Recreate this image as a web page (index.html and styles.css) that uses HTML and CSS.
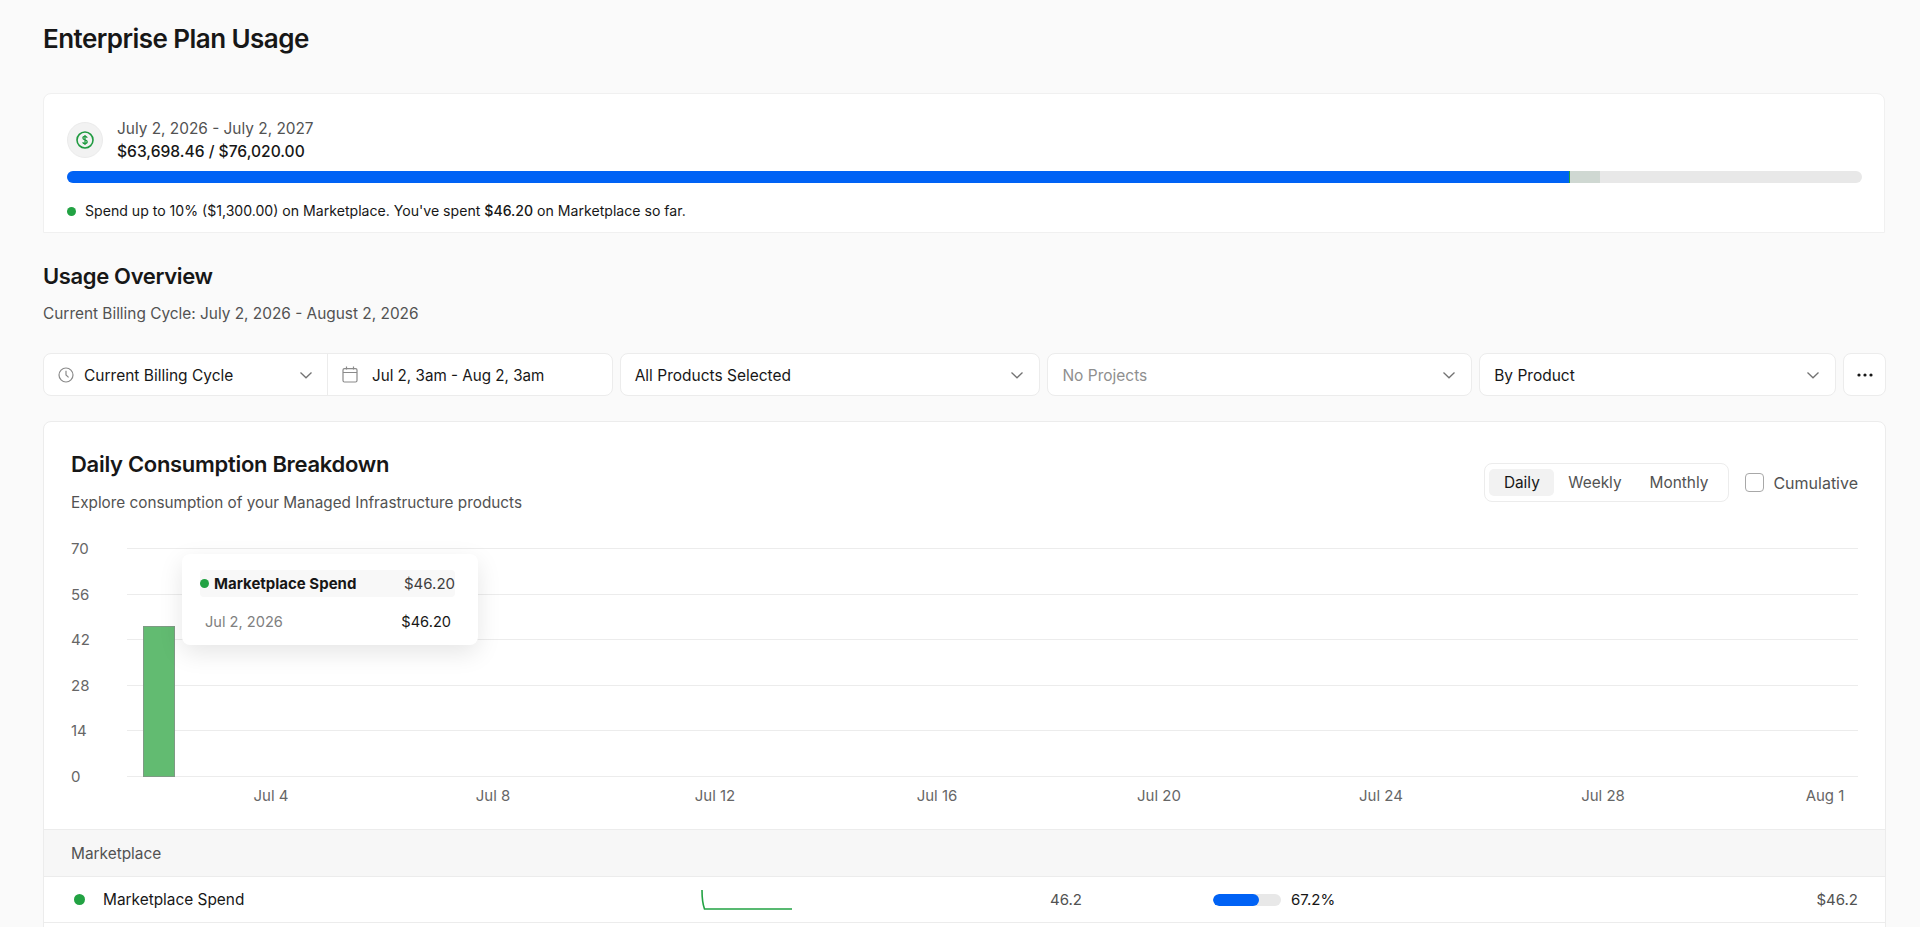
FILE: index.html
```html
<!DOCTYPE html>
<html>

<head>
    <meta charset="utf-8">
    <title>Enterprise Plan Usage</title>
    <link rel="stylesheet" href="styles.css">
</head>

<body>
    <div class="page">
        <h1 class="page-title">Enterprise Plan Usage</h1>

        <section class="plan-card">
            <div class="plan-head">
                <span class="plan-icon">
                    <svg width="18" height="18" viewBox="0 0 18 18" fill="none" stroke="#1f9a40" stroke-width="1.600">
                        <circle cx="9" cy="9" r="8"></circle>
                        <path d="M11.200 6.700c-.3-.8-1.100-1.300-2.200-1.300-1.200 0-2.100.7-2.100 1.700 0 2.400 4.300 1.200 4.300 3.700 0 1.100-1 1.800-2.200 1.800-1.100 0-2-.5-2.300-1.400M9 4v10" stroke-width="1.300"></path>
                    </svg>
                </span>
                <div class="plan-text">
                    <div class="plan-dates">July 2, 2026 - July 2, 2027</div>
                    <div class="plan-amount">$63,698.46 / $76,020.00</div>
                </div>
            </div>
            <div class="plan-bar">
                <div class="plan-bar-used"></div>
                <div class="plan-bar-mark"></div>
                <div class="plan-bar-market"></div>
            </div>
            <div class="plan-note">
                <span class="dot"></span>
                <span>Spend up to 10% ($1,300.00) on Marketplace. You've spent <span class="medium">$46.20</span> on Marketplace so far.</span>
            </div>
        </section>

        <h2 class="section-title">Usage Overview</h2>
        <p class="section-sub">Current Billing Cycle: July 2, 2026 - August 2, 2026</p>

        <div class="toolbar">
            <div class="range-group">
                <div class="range-preset">
                    <svg class="tool-icon" width="16" height="16" viewBox="0 0 16 16" fill="none" stroke="#8a8a8a" stroke-width="1.2">
                        <circle cx="8" cy="8" r="7"></circle>
                        <path d="M8 3.800V8l2.600 2.400"></path>
                    </svg>
                    <span class="select-label">Current Billing Cycle</span>
                    <svg class="chevron" width="14" height="8" viewBox="0 0 14 8" fill="none" stroke="#737373" stroke-width="1.300">
                        <path d="M1.500 1.500L7 6.800l5.500-5.300"></path>
                    </svg>
                </div>
                <div class="range-dates">
                    <svg class="tool-icon" width="16" height="17" viewBox="0 0 16 17" fill="none" stroke="#8a8a8a" stroke-width="1.200">
                        <rect x="1" y="2.600" width="14" height="13.400" rx="1.500"></rect>
                        <path d="M1 6.500h14M4.500 .5v3M11.500 .5v3"></path>
                    </svg>
                    <span class="select-label">Jul 2, 3am - Aug 2, 3am</span>
                </div>
            </div>
            <div class="select select-products">
                <span class="select-label">All Products Selected</span>
                <svg class="chevron" width="14" height="8" viewBox="0 0 14 8" fill="none" stroke="#737373" stroke-width="1.300">
                    <path d="M1.500 1.500L7 6.800l5.500-5.300"></path>
                </svg>
            </div>
            <div class="select select-projects">
                <span class="select-label placeholder">No Projects</span>
                <svg class="chevron" width="14" height="8" viewBox="0 0 14 8" fill="none" stroke="#737373" stroke-width="1.300">
                    <path d="M1.500 1.500L7 6.800l5.500-5.300"></path>
                </svg>
            </div>
            <div class="select select-group">
                <span class="select-label">By Product</span>
                <svg class="chevron" width="14" height="8" viewBox="0 0 14 8" fill="none" stroke="#737373" stroke-width="1.300">
                    <path d="M1.500 1.500L7 6.800l5.500-5.300"></path>
                </svg>
            </div>
            <div class="more-btn">
                <svg width="16" height="4" viewBox="0 0 16 4" fill="#171717">
                    <circle cx="2" cy="2" r="1.600"></circle>
                    <circle cx="8" cy="2" r="1.600"></circle>
                    <circle cx="14" cy="2" r="1.600"></circle>
                </svg>
            </div>
        </div>

        <section class="chart-card">
            <div class="chart-head">
                <div>
                    <h3 class="chart-title">Daily Consumption Breakdown</h3>
                    <p class="chart-sub">Explore consumption of your Managed Infrastructure products</p>
                </div>
                <div class="chart-controls">
                    <div class="segment">
                        <span class="segment-item active">Daily</span>
                        <span class="segment-item">Weekly</span>
                        <span class="segment-item">Monthly</span>
                    </div>
                    <label class="cumulative"><span class="checkbox"></span>Cumulative</label>
                </div>
            </div>

            <div class="chart">
                <div class="ticks">
                    <div class="tick"><span class="tick-label">70</span><span class="tick-line"></span></div>
                    <div class="tick"><span class="tick-label">56</span><span class="tick-line"></span></div>
                    <div class="tick"><span class="tick-label">42</span><span class="tick-line"></span></div>
                    <div class="tick"><span class="tick-label">28</span><span class="tick-line"></span></div>
                    <div class="tick"><span class="tick-label">14</span><span class="tick-line"></span></div>
                    <div class="tick"><span class="tick-label">0</span><span class="tick-line"></span></div>
                </div>
                <div class="bar" style="height: 151px"></div>
                <div class="tooltip">
                    <div class="tooltip-head">
                        <span class="tooltip-name"><span class="dot"></span>Marketplace Spend</span>
                        <span class="tooltip-total">$46.20</span>
                    </div>
                    <div class="tooltip-row">
                        <span class="tooltip-date">Jul 2, 2026</span>
                        <span>$46.20</span>
                    </div>
                </div>
            </div>
            <div class="x-axis">
                <span class="x-label">Jul 4</span>
                <span class="x-label">Jul 8</span>
                <span class="x-label">Jul 12</span>
                <span class="x-label">Jul 16</span>
                <span class="x-label">Jul 20</span>
                <span class="x-label">Jul 24</span>
                <span class="x-label">Jul 28</span>
                <span class="x-label">Aug 1</span>
            </div>

            <div class="table-group">Marketplace</div>
            <div class="table-row">
                <div class="row-name"><span class="dot dot-large"></span>Marketplace Spend</div>
                <svg class="spark" width="92" height="20" viewBox="0 0 92 20" fill="none" stroke="#22a243" stroke-width="1.600">
                    <path d="M1 0c0 8 .7 14 2.500 19H91"></path>
                </svg>
                <div class="row-qty">46.2</div>
                <div class="row-share">
                    <div class="share-bar"><div class="share-fill"></div></div>
                    <span>67.2%</span>
                </div>
                <div class="row-cost">$46.2</div>
            </div>
            <div class="table-row"></div>
        </section>
    </div>
</body>

</html>
```

FILE: styles.css
```css
* {
    box-sizing: border-box;
}

html,
body {
    margin: 0;
    height: 100%;
    overflow: hidden;
}

body {
    background: #fafafa;
    color: #171717;
    font-family: Inter, "Liberation Sans", sans-serif;
    font-size: 15.4px;
}

.page {
    width: 1843px;
    margin-left: 43px;
}

.page-title {
    margin: 0;
    padding-top: 22px;
    height: 93px;
    font-size: 26px;
    line-height: 34px;
    font-weight: 600;
    letter-spacing: -0.55px;
}

.plan-card {
    width: 1842px;
    height: 140px;
    padding: 27px 22px 0 23px;
    background: #fff;
    border: 1px solid #f0f0f0;
    border-radius: 8px 8px 0 0;
}

.plan-head {
    display: flex;
    align-items: center;
    gap: 14px;
    height: 38px;
}

.plan-icon {
    display: flex;
    align-items: center;
    justify-content: center;
    width: 36px;
    height: 36px;
    background: #f2f2f2;
    border: 1px solid #ebebeb;
    border-radius: 50%;
}

.plan-dates {
    color: #525252;
    line-height: 23px;
}

.plan-amount {
    font-weight: 500;
    font-size: 15.6px;
    line-height: 23px;
}

.plan-bar {
    display: flex;
    height: 12px;
    margin-top: 12px;
    background: #e8e8e8;
    border-radius: 6px;
    overflow: hidden;
}

.plan-bar-used {
    width: 1502px;
    background: #0062f5;
}

.plan-bar-mark {
    width: 1px;
    background: #22a243;
}

.plan-bar-market {
    width: 30px;
    background: #cfd8d2;
}

.plan-note {
    display: flex;
    align-items: center;
    gap: 9px;
    margin-top: 18px;
    font-size: 14.1px;
    line-height: 20px;
}

.medium {
    font-weight: 500;
}

.dot {
    display: inline-block;
    flex: none;
    width: 9px;
    height: 9px;
    background: #22a243;
    border-radius: 50%;
}

.dot-large {
    width: 11px;
    height: 11px;
}

.section-title {
    margin: 28px 0 0;
    font-size: 22px;
    line-height: 30px;
    font-weight: 600;
    letter-spacing: -0.35px;
}

.section-sub {
    margin: 12px 0 0;
    color: #525252;
    line-height: 22px;
}

.toolbar {
    display: flex;
    gap: 7px;
    height: 43px;
    margin-top: 28px;
    font-size: 15.5px;
}

.range-group,
.select,
.more-btn {
    display: flex;
    align-items: center;
    background: #fff;
    border: 1px solid #ececec;
    border-radius: 8px;
}

.range-group {
    width: 570px;
}

.range-preset {
    display: flex;
    align-items: center;
    width: 284px;
    height: 100%;
    padding: 0 14px 0 14px;
    border-right: 1px solid #ececec;
}

.range-dates {
    display: flex;
    align-items: center;
    padding-left: 14px;
    font-size: 15.2px;
}

.tool-icon {
    flex: none;
    margin-right: 10px;
}

.range-dates .tool-icon {
    margin-right: 14px;
}

.select {
    padding: 0 15px 0 14px;
}

.select-label {
    padding-top: 1px;
    white-space: nowrap;
}

.chevron {
    flex: none;
    margin-left: auto;
}

.placeholder {
    color: #8f8f8f;
}

.select-products {
    width: 421px;
}

.select-projects {
    width: 425px;
}

.select-group {
    width: 357px;
}

.more-btn {
    justify-content: center;
    width: 43px;
}

.chart-card {
    margin-top: 25px;
    background: #fff;
    border: 1px solid #ececec;
    border-radius: 8px 8px 0 0;
}

.chart-head {
    display: flex;
    justify-content: space-between;
    align-items: flex-start;
    height: 126px;
    padding: 28px 27px 0;
}

.chart-title {
    margin: 0;
    font-size: 22px;
    line-height: 28px;
    font-weight: 600;
    letter-spacing: -0.3px;
}

.chart-sub {
    margin: 14px 0 0;
    color: #525252;
    font-size: 15.3px;
    line-height: 22px;
}

.chart-controls {
    display: flex;
    align-items: center;
    gap: 16px;
    margin-top: 13px;
}

.segment {
    display: flex;
    align-items: center;
    height: 39px;
    padding: 0 6px 0 4px;
    border: 1px solid #ececec;
    border-radius: 8px;
}

.segment-item {
    padding: 0 14px;
    height: 27px;
    line-height: 27px;
    color: #525252;
    border-radius: 5px;
}

.segment-item.active {
    width: 65px;
    text-align: center;
    color: #171717;
    background: #f2f2f2;
}

.cumulative {
    display: flex;
    align-items: center;
    gap: 9px;
    color: #525252;
    font-size: 16px;
}

.checkbox {
    width: 19px;
    height: 19px;
    background: #fff;
    border: 1px solid #a8a8a8;
    border-radius: 4px;
}

.chart {
    position: relative;
    margin: 0 27px;
    font-size: 15px;
}

.ticks {
    display: flex;
    flex-direction: column;
    justify-content: space-between;
    height: 229px;
}

.tick {
    display: flex;
    align-items: center;
    height: 1px;
}

.tick-label {
    width: 56px;
    color: #666;
    line-height: 1px;
}

.tick-line {
    flex: 1;
    height: 1px;
    background: #ececec;
}

.bar {
    position: absolute;
    left: 72px;
    bottom: 0;
    width: 32px;
    background: #62bb71;
    border: 1px solid #7e9a84;
}

.tooltip {
    position: absolute;
    left: 111px;
    top: 6px;
    width: 296px;
    height: 91px;
    padding: 16px 23px 16px 18px;
    background: #fff;
    border-radius: 8px;
    box-shadow: 0 8px 24px rgba(0, 0, 0, 0.1);
}

.tooltip-head {
    display: flex;
    align-items: center;
    justify-content: space-between;
    height: 27px;
    background: #f8f8f8;
    border-radius: 4px;
}

.tooltip-name {
    display: flex;
    align-items: center;
    gap: 5px;
    font-weight: 700;
    font-size: 15px;
}

.tooltip-total {
    color: #404040;
}

.tooltip-row {
    display: flex;
    justify-content: space-between;
    margin-top: 15px;
    padding: 0 4px 0 5px;
    font-size: 14.6px;
    line-height: 20px;
}

.tooltip-date {
    color: #808080;
}

.x-axis {
    display: flex;
    justify-content: space-between;
    height: 52px;
    padding: 10px 60px 0 227px;
    font-size: 15px;
}

.x-label {
    display: flex;
    justify-content: center;
    width: 0;
    color: #666;
    white-space: nowrap;
    line-height: 18px;
}

.table-group {
    display: flex;
    align-items: center;
    height: 47px;
    padding: 0 27px;
    color: #525252;
    background: #f7f7f7;
    border-top: 1px solid #ececec;
}

.table-row {
    display: grid;
    grid-template-columns: 630px 120px 261px 1fr auto;
    align-items: center;
    height: 46px;
    padding: 0 27px;
    border-top: 1px solid #ececec;
    font-size: 15px;
}

.row-name {
    display: flex;
    align-items: center;
    gap: 18px;
    padding-left: 3px;
    font-size: 15.4px;
}

.row-qty {
    text-align: right;
    color: #525252;
}

.row-share {
    display: flex;
    align-items: center;
    gap: 10px;
    padding-left: 131px;
}

.share-bar {
    width: 68px;
    height: 12px;
    background: #e8e8e8;
    border-radius: 6px;
    overflow: hidden;
}

.share-fill {
    width: 46px;
    height: 100%;
    background: #0062f5;
    border-radius: 6px;
}

.row-cost {
    color: #525252;
}
```
